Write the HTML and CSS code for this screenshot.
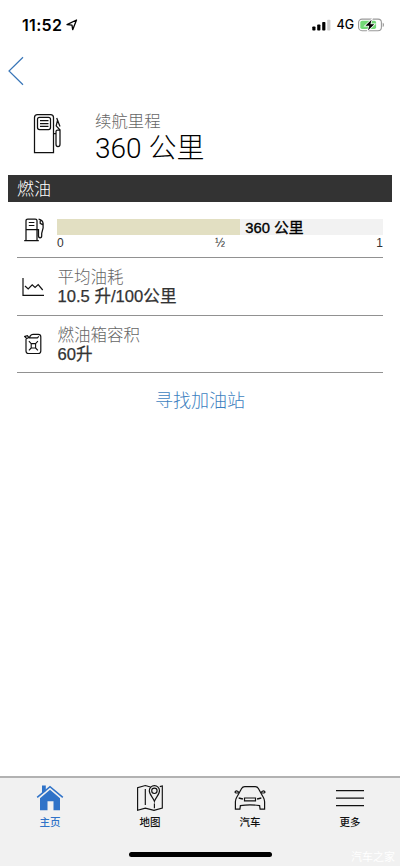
FILE: index.html
```html
<!DOCTYPE html>
<html lang="zh-CN">
<head>
<meta charset="utf-8">
<meta name="viewport" content="width=device-width, initial-scale=1">
<title>续航里程</title>
<link rel="stylesheet" href="styles.css">
</head>
<body>
<div class="app">
  <header class="status">
    <div class="status-left">
      <span class="time">11:52</span>
      <svg class="arrow" width="12" height="12" viewBox="0 0 12 12"><path d="M1 5.6 10.5 1 6.7 10.7 6 6.1Z" fill="none" stroke="#000" stroke-width="1.3" stroke-linejoin="round"/></svg>
    </div>
    <div class="status-right">
      <svg width="19" height="12" viewBox="0 0 19 12"><rect x="0.3" y="7.5" width="3.2" height="4" rx=".8"/><rect x="5.2" y="5.5" width="3.2" height="6" rx=".8"/><rect x="10.2" y="3" width="3.2" height="8.5" rx=".8"/><rect x="15.2" y=".7" width="3.2" height="10.8" rx=".8" fill="#ccc"/></svg>
      <span class="network">4G</span>
      <svg width="27" height="14" viewBox="0 0 27 14"><rect x=".6" y="1.1" width="22.8" height="11.6" rx="3.4" fill="#fff" stroke="#999" stroke-width="1.1"/><rect x="2.3" y="2.8" width="15.8" height="8.2" rx="1.8" fill="#72d876"/><path d="M24.7 4.8c1.7.5 1.7 3.7 0 4.2Z" fill="#999"/><path d="M13.6 1.7 7.4 7.7h3.9l-1.4 4.8 6.4-6.3h-3.9Z" stroke="#fff" stroke-width="1.6" paint-order="stroke"/></svg>
    </div>
  </header>
  <nav class="back"><svg width="16" height="30" viewBox="0 0 16 30"><path d="M15 1.2 1 15 15 28.8" fill="none" stroke="#3976b8" stroke-width="1.2"/></svg></nav>

  <section class="summary">
    <svg class="pump-large" width="30" height="42" viewBox="0 0 30 42" fill="none" stroke="#111" stroke-width="1.25"><path d="M1.5 39.5V4.5q0-3 3-3h13q3 0 3 3v35Z"/><rect x="4.5" y="4.3" width="13" height="12.3" rx="2"/><path d="M7 7.5h8.5M7 10.5h8.5M7 13.4h8.5M27 13.4 23.700 5M24.500 7.500l-1.300 5.300 3.800 4.200"/><path d="M23 18.500q0-1.500 1.500-1.500H27v14.200q0 2.300-2 2.300t-2-2.300ZM20.500 20.500H23"/></svg>
    <div class="summary-copy">
      <div class="summary-label">续航里程</div>
      <div class="summary-value">360 公里</div>
    </div>
  </section>

  <h2 class="section-title">燃油</h2>
  <main class="rows">
    <section class="row gauge-row">
      <svg class="row-icon pump-small" width="22" height="24" viewBox="0 0 22 24" fill="none" stroke="#111" stroke-width="1.25"><path d="M2 22.5V2.8Q2 1 3.8 1h7.4Q13 1 13 2.8v19.7M.2 22.6h14.6M2 11.5h11M13 11.5h1.5v6.3q0 2.1 1.6 2.1t1.6-2.1v-2.5l1.4-5.3V5.6Q18.9 2.2 14.6 1.2M16.2 2.4v3l2.9 1.5"/><path d="M4.8 4.5h5.6M4.8 7.5h5.6" stroke-width="1"/></svg>
      <div class="gauge">
        <div class="gauge-track"><div class="gauge-fill" style="width:56.2%"></div><span class="gauge-value">360 公里</span></div>
        <div class="scale"><span>0</span><span>½</span><span>1</span></div>
      </div>
    </section>
    <section class="row">
      <svg class="row-icon chart" width="22" height="19" viewBox="0 0 22 19" fill="none" stroke="#111" stroke-width="1.2"><path d="M1 0v17.4h21M3 8l3.2 3 4-4.2 2.9 2.7L16.2 6.6l4.5 5.4"/></svg>
      <div><div class="row-label">平均油耗</div><div class="row-value">10.5 升/100公里</div></div>
    </section>
    <section class="row last">
      <svg class="row-icon can" width="18" height="22" viewBox="0 0 18 22" fill="none" stroke="#111" stroke-width="1.2"><path d="M2 6v12q0 2.500 2.500 2.500h9.800q2.500 0 2.500-2.500V3.800q0-2.500-2.500-2.500H9Q7.200 1.300 6.300 2.900L5.300 4.800M5 4.800h8.400l1.400-1.400M.8 3.500 2.600 5.600 4.900 4.500 3.400 2.700Z"/><path d="M7.200 10.600h4.400v4.400H7.200ZM4.900 8.200l2.300 2.400m4.400 0 2.300-2.400M4.900 17.400l2.300-2.400m4.400 0 2.300 2.400" stroke-width="1.100"/></svg>
      <div><div class="row-label">燃油箱容积</div><div class="row-value">60升</div></div>
    </section>
  </main>
  <a class="find">寻找加油站</a>

  <footer class="tabbar">
    <div class="tabs">
      <div class="tab active"><svg width="28" height="28" viewBox="0 0 28 28" fill="#3073c8"><path d="M4 14.3 14 5.8l10 8.5v11.9h-6.500v-9h-6v9H4Z"/><path d="M6 1.500h3.800V7L6 10.100Z"/><path d="M1.200 13.400 14 2.700l12.800 10.700" fill="none" stroke="#3073c8" stroke-width="1.600"/></svg><span>主页</span></div>
      <div class="tab"><svg width="28" height="28" viewBox="0 0 28 28" fill="none" stroke="#111" stroke-width="1.150"><path d="M14.500 3 9.300 1.500 1.600 3.800v22.500l7.700-2.200 8.700 2.300 8.300-2.300V1.900l-2.500.7M9.300 5V21M18.400 19.500v4.700M18.400 17.400c-1-3.400-5.100-6.800-5.100-10.700a5.100 5.100 0 0 1 10.200 0c0 3.900-4.100 7.300-5.100 10.700Z"/><circle cx="18.400" cy="6.800" r="2.700"/></svg><span>地图</span></div>
      <div class="tab"><svg width="32" height="28" viewBox="0 0 32 28" fill="none" stroke="#111" stroke-width="1.200"><path d="M5 9.300 7.600 4.500Q8.600 2.600 10.700 2.600h10.600q2.100 0 3.100 1.900L27 9.300l2.400 4.200q1.200 2 1.200 4.300v7.400h-4.500l-.5-3.600Q16 20.200 6.400 21.600l-.5 3.600H1.400v-7.400q0-2.300 1.200-4.300ZM4.400 9l-2.700-.2q-1-.4-.4-1.300Q3 6 4.800 8.400M27.600 9l2.700-.2q1-.4.4-1.300Q29 6 27.200 8.400M10.500 14h11v2.800h-11Z"/><path d="M4.700 14.100l4.200.8M27.300 14.100l-4.200.8" stroke-width="1.500"/></svg><span>汽车</span></div>
      <div class="tab"><svg width="28" height="28" viewBox="0 0 28 28" stroke="#111" stroke-width="1.250"><path d="M0 6.500h28M0 14h28M0 21.500h28"/></svg><span>更多</span></div>
    </div>
    <div class="home-indicator"></div>
    <span class="watermark">汽车之家</span>
  </footer>
</div>
</body>
</html>
```
FILE: styles.css
```css
* { box-sizing: border-box; }
body {
  margin: 0;
  background: #fff;
  color: #222;
  font-family: "Liberation Sans", "Noto Sans CJK SC", sans-serif;
}
.app { height: 866px; display: flex; flex-direction: column; overflow: hidden; }
.status {
  height: 49px;
  padding: 0 15px 0 22px;
  display: flex;
  align-items: center;
  justify-content: space-between;
  color: #000;
}
.status-left, .status-right { display: flex; align-items: center; }
.time { font: 600 16px/20px Inter, sans-serif; letter-spacing: .3px; }
.arrow { margin-left: 4px; }
.status-right svg { display: block; }
.network { font: 500 12.5px/20px Inter, sans-serif; margin: 1px 4px 0 5px; }
.back { height: 50px; padding: 7px 0 0 8px; }
.summary { height: 76px; padding: 11px 0 0 33px; display: flex; }
.pump-large { margin-top: 3px; }
.summary-copy { margin-left: 32px; white-space: nowrap; }
.summary-label {
  color: #666;
  font: 300 16.4px/21px "Noto Sans CJK SC", sans-serif;
}
.summary-value {
  color: #000;
  font: 300 28px/36px Roboto, "Noto Sans CJK SC", sans-serif;
}
.section-title {
  height: 27px;
  margin: 0 8px;
  padding-left: 9px;
  background: #333;
  color: #fff;
  font: 300 17px/25px "Noto Sans CJK SC", sans-serif;
}
.rows { margin: 0 17px; }
.row {
  height: 58px;
  display: flex;
  border-bottom: 1px solid #919191;
  padding-top: 8px;
}
.gauge-row { height: 56px; padding-top: 17px; }
.last { height: 57px; }
.row-icon { flex: none; }
.pump-small { margin: -1px 11px 0 7px; }
.chart { margin: 12px 13.5px 0 5px; }
.can { margin: 9px 15.5px 0 7px; }
.gauge { flex: 1; }
.gauge-track {
  height: 16px;
  display: flex;
  align-items: center;
  background: #f2f2f2;
}
.gauge-fill { height: 16px; background: #e2dfc2; }
.gauge-value {
  margin-left: 5px;
  padding-top: 1px;
  color: #000;
  font-size: 14.8px;
  line-height: 16px;
  -webkit-text-stroke: .35px #000;
}
.scale {
  display: grid;
  grid-template-columns: 1fr 1fr 1fr;
  color: #333;
  font-size: 12px;
  line-height: 16px;
}
.scale span:nth-child(2) { text-align: center; }
.scale span:last-child { text-align: right; }
.row-label {
  color: #666;
  font: 300 16.5px/20px "Noto Sans CJK SC", sans-serif;
}
.row-value {
  color: #333;
  font-size: 16.6px;
  line-height: 21px;
  -webkit-text-stroke: .25px #333;
}
.find {
  margin-top: 13px;
  color: #3d7fc0;
  text-align: center;
  font: 300 18px/26px "Noto Sans CJK SC", sans-serif;
}
.tabbar {
  position: relative;
  height: 90px;
  flex: none;
  margin-top: auto;
  background: #f1f1f1;
  border-top: 2px solid #b2b2b2;
}
.tabs { display: grid; grid-template-columns: repeat(4, 1fr); height: 73px; padding-top: 6px; }
.tab {
  display: flex;
  flex-direction: column;
  align-items: center;
  color: #111;
  font: 500 10.5px/16px "Noto Sans CJK SC", sans-serif;
}
.tab span { margin-top: 2px; }
.active { color: #3073c8; }
.home-indicator { width: 143px; height: 5px; margin: 1px auto 0; border-radius: 3px; background: #000; }
.watermark {
  position: absolute;
  right: 5px;
  bottom: 3px;
  color: #fff;
  font: 400 11px/14px "Noto Sans CJK SC", sans-serif;
}
```
